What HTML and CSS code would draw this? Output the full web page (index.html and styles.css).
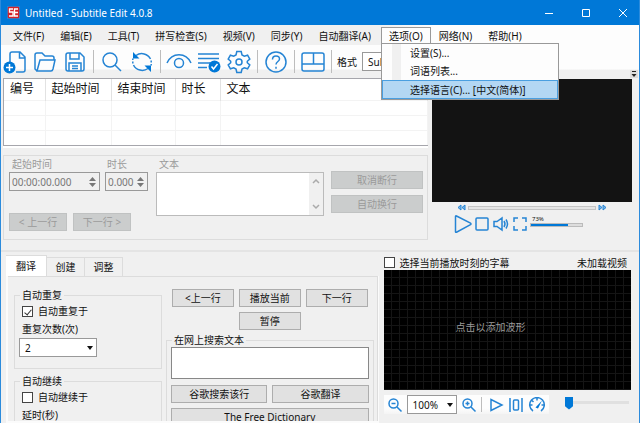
FILE: index.html
```html
<!DOCTYPE html>
<html lang="zh-CN">
<head>
<meta charset="utf-8">
<title>Untitled - Subtitle Edit 4.0.8</title>
<link rel="stylesheet" href="styles.css">
</head>
<body>
<div class="window">
  <header class="titlebar">
    <svg class="logo" viewBox="0 0 13 13"><rect width="13" height="13" rx="2" fill="#d3222a"/><path d="M6 3H2.500v3H6v4H2M11 3H7.500v7H11M7.500 6.500H11" fill="none" stroke="#fff" stroke-width="1.300"/></svg>
    <h1>Untitled - Subtitle Edit 4.0.8</h1>
    <div class="caption">
      <button aria-label="最小化"><svg viewBox="0 0 10 10"><path d="M1 5.500h8"/></svg></button>
      <button aria-label="最大化"><svg viewBox="0 0 10 10"><path d="M1.500 1.500h7v7h-7z"/></svg></button>
      <button aria-label="关闭"><svg viewBox="0 0 10 10"><path d="M1 1l8 8M9 1L1 9"/></svg></button>
    </div>
  </header>

  <nav class="menubar">
    <button>文件(F)</button>
    <button>编辑(E)</button>
    <button>工具(T)</button>
    <button>拼写检查(S)</button>
    <button>视频(V)</button>
    <button>同步(Y)</button>
    <button>自动翻译(A)</button>
    <div class="menu-open">
      <button>选项(O)</button>
      <div class="dropdown">
        <button>设置(S)...</button>
        <button>词语列表...</button>
        <button class="current">选择语言(C)... [中文(简体)]</button>
      </div>
    </div>
    <button>网络(N)</button>
    <button>帮助(H)</button>
  </nav>

  <div class="toolbar">
    <button aria-label="新建"><svg viewBox="0 0 24 24"><path d="M7 12V4q0-2 2-2h8l5 5v13q0 2-2 2h-7M16.500 2v6H22"/><circle cx="6.500" cy="17.500" r="6" class="solid"/><path d="M6.500 14v7M3 17.500h7" class="white"/></svg></button>
    <button aria-label="打开"><svg viewBox="0 0 24 24"><path d="M4 21L2 19V5q0-2 2-2h5l3 3h7q2 0 2 2v2M4 21l3-11h15l-2 9q-.5 2-2 2z"/></svg></button>
    <button aria-label="保存"><svg viewBox="0 0 24 24"><path d="M3 5q0-2 2-2h12l4 4v12q0 2-2 2H5q-2 0-2-2zM7 3v6h9V3M6 21v-8h12v8M9 16h6M9 18.500h6"/></svg></button>
    <span class="sep"></span>
    <button aria-label="查找"><svg viewBox="0 0 24 24"><circle cx="10" cy="10" r="7"/><path d="M15 15l6 6"/></svg></button>
    <button aria-label="替换"><svg viewBox="0 0 24 24"><path d="M6 5.500A9.500 9 0 0 1 20.500 9M18 18.500A9.500 9 0 0 1 3.500 15"/><path d="M2.800 13.500v-5M21.200 10.500v5" stroke-dasharray="2 1.500"/><path d="M3 2v6.500h6.500zM21 22v-6.500h-6.500z" class="solid"/></svg></button>
    <span class="sep"></span>
    <button class="eye" aria-label="可视同步"><svg viewBox="0 0 28 24"><path d="M2 13C7 2 21 2 26 13"/><circle cx="14" cy="13" r="4.500"/></svg></button>
    <button aria-label="拼写检查"><svg viewBox="0 0 24 24"><path d="M1 4h21M1 8.500h21M1 13h12M1 17.500h9"/><circle cx="17.500" cy="16.500" r="6" class="solid"/><path d="M14.500 16.500l2 2.500 4-5" class="white"/></svg></button>
    <button aria-label="设置"><svg viewBox="0 0 24 24"><path d="M9.800 1.500h4.400l.8 3.400 2.300 1.300 3.300-1 2.200 3.800-2.500 2.300v1.400l2.500 2.300-2.200 3.800-3.300-1-2.300 1.300-.8 3.400H9.800L9 19.100l-2.300-1.300-3.300 1L1.200 15l2.500-2.300v-1.400L1.200 9l2.200-3.800 3.300 1L9 4.900z"/><circle cx="12" cy="12" r="3"/></svg></button>
    <span class="sep"></span>
    <button aria-label="帮助"><svg viewBox="0 0 24 24"><circle cx="12" cy="12" r="10"/><path d="M8.500 9.500c0-5 7-4.500 7-.5 0 2.500-3.500 2.500-3.500 5.500M12 16.800v2"/></svg></button>
    <span class="sep"></span>
    <button aria-label="布局"><svg viewBox="0 0 24 24"><rect x="1" y="3" width="22" height="18" rx="2"/><path d="M1 14h22M12.500 3v11"/></svg></button>
    <span class="sep"></span>
    <label for="format">格式</label>
    <div class="combo format"><select id="format"><option>SubRip (.srt)</option></select></div>
    <svg class="grip" viewBox="0 0 8 8"><path d="M2 1.500h4"/><path d="M1.500 4h5L4 7z" fill="#222" stroke="none"/></svg>
  </div>

  <main class="upper">
    <section class="editor">
      <div class="list">
        <table>
          <colgroup><col class="c1"><col class="c2"><col class="c3"><col class="c4"><col></colgroup>
          <thead><tr><th>编号</th><th>起始时间</th><th>结束时间</th><th>时长</th><th>文本</th></tr></thead>
          <tbody>
            <tr><td></td><td></td><td></td><td></td><td></td></tr>
            <tr><td></td><td></td><td></td><td></td><td></td></tr>
            <tr><td></td><td></td><td></td><td></td><td></td></tr>
          </tbody>
        </table>
      </div>
      <div class="edit">
        <div class="times">
          <div class="time-row">
            <div class="field start"><label for="start">起始时间</label>
              <div class="spin"><input id="start" value="00:00:00.000" disabled><svg viewBox="0 0 7 12"><path d="M0 5l3.500-4L7 5zM0 7l3.500 4L7 7z"/></svg></div></div>
            <div class="field dur"><label for="dur">时长</label>
              <div class="spin"><input id="dur" value="0.000" disabled><svg viewBox="0 0 7 12"><path d="M0 5l3.500-4L7 5zM0 7l3.500 4L7 7z"/></svg></div></div>
          </div>
          <div class="step-row">
            <button class="btn" disabled>&lt; 上一行</button>
            <button class="btn" disabled>下一行 &gt;</button>
          </div>
        </div>
        <div class="field text"><label for="text">文本</label>
          <div class="area"><textarea id="text" disabled></textarea>
            <span class="scroll"><svg viewBox="0 0 8 6"><path d="M1 5l3-3 3 3"/></svg><svg viewBox="0 0 8 6"><path d="M1 1l3 3 3-3"/></svg></span></div></div>
        <div class="breaks">
          <button class="btn" disabled>取消断行</button>
          <button class="btn" disabled>自动换行</button>
        </div>
      </div>
    </section>
    <section class="player">
      <div class="video"></div>
      <div class="seek">
        <button aria-label="后退"><svg viewBox="0 0 9 7"><path d="M4 1L1 3.500 4 6zM8 1L5 3.500 8 6z"/></svg></button>
        <span class="track"></span>
        <button aria-label="前进"><svg viewBox="0 0 9 7"><path d="M1 1l3 2.500L1 6zM5 1l3 2.500L5 6z"/></svg></button>
      </div>
      <div class="transport">
        <button aria-label="播放"><svg viewBox="0 0 18 18"><path d="M1.500 1.500q0-1 1-.5l14 7.200q1 .8 0 1.500L2.500 17.200q-1 .3-1-.5z"/></svg></button>
        <button aria-label="停止"><svg viewBox="0 0 18 18"><rect x="3" y="3" width="12" height="12" rx="1"/></svg></button>
        <button aria-label="静音"><svg viewBox="0 0 18 18"><path d="M2 6.500h3L10 3v12l-5-3.500H2zM12 6q2 3 0 6M14 4.500q3 4.500 0 9"/></svg></button>
        <button aria-label="全屏"><svg viewBox="0 0 18 18"><path d="M3 7V3h4M11 3h4v4M15 11v4h-4M7 15H3v-4"/></svg></button>
        <div class="volume"><span>73%</span><div class="level"></div></div>
      </div>
    </section>
  </main>

  <div class="lower">
    <section class="tabs">
      <div class="tab-row" role="tablist">
        <button role="tab" class="active" aria-selected="true">翻译</button>
        <button role="tab">创建</button>
        <button role="tab">调整</button>
      </div>
      <div class="panel">
        <div class="side">
          <fieldset>
            <legend>自动重复</legend>
            <label class="check"><input type="checkbox" checked>自动重复于</label>
            <label class="caption-label" for="count">重复次数(次)</label>
            <div class="combo count"><select id="count"><option>2</option></select></div>
          </fieldset>
          <fieldset>
            <legend>自动继续</legend>
            <label class="check"><input type="checkbox">自动继续于</label>
            <span class="caption-label">延时(秒)</span>
          </fieldset>
        </div>
        <div class="actions">
          <div class="play-grid">
            <button class="btn">&lt;上一行</button>
            <button class="btn">播放当前</button>
            <button class="btn">下一行</button>
            <button class="btn pause">暂停</button>
          </div>
          <fieldset class="search">
            <legend>在网上搜索文本</legend>
            <textarea aria-label="在网上搜索文本"></textarea>
            <div class="search-grid">
              <button class="btn">谷歌搜索该行</button>
              <button class="btn">谷歌翻译</button>
              <button class="btn wide">The Free Dictionary</button>
            </div>
          </fieldset>
        </div>
      </div>
    </section>
    <section class="wave">
      <div class="wave-head">
        <label class="check"><input type="checkbox">选择当前播放时刻的字幕</label>
        <span>未加载视频</span>
      </div>
      <div class="canvas"><span>点击以添加波形</span></div>
      <div class="wave-foot">
        <div class="wave-tools">
          <button aria-label="缩小"><svg viewBox="0 0 16 16"><circle cx="6.500" cy="6.500" r="4.500"/><path d="M10 10l4.500 4.500M4.500 6.500h4"/></svg></button>
          <div class="combo zoom"><select aria-label="缩放"><option>100%</option></select></div>
          <button aria-label="放大"><svg viewBox="0 0 16 16"><circle cx="6.500" cy="6.500" r="4.500"/><path d="M10 10l4.500 4.500M4.500 6.500h4M6.500 4.500v4"/></svg></button>
          <span class="sep"></span>
          <button aria-label="播放"><svg viewBox="0 0 16 16"><path d="M3 2.500v11L14 8z"/></svg></button>
          <button aria-label="居中"><svg viewBox="0 0 16 16"><path d="M2 1v14M14 1v14"/><rect x="5.500" y="3" width="5" height="10" rx="1"/></svg></button>
          <button class="gauge" aria-label="播放速度"><svg viewBox="0 0 18 16"><path d="M5 14A7.300 7.300 0 1 1 13 14M9 1v2.500M2 8h2.500M13.500 8H16M4 3.500L5.500 5"/><path d="M7.500 10.500L14 3.500l-4 8z" class="solid"/></svg></button>
        </div>
        <input type="range" min="0" max="100" value="0" aria-label="垂直缩放">
      </div>
    </section>
  </div>
</div>
</body>
</html>
```
FILE: styles.css
```css
* { box-sizing: border-box; }

:root {
  --blue: #0078d7;
  --face: #f0f0f0;
  --line: #dcdcdc;
}

body {
  margin: 0;
  font: 10px/14px "Noto Sans", "Noto Sans CJK SC", sans-serif;
  color: #111;
  background: var(--face);
}

button, input, select, textarea {
  font: inherit;
  color: inherit;
  margin: 0;
  padding: 0;
}

button {
  border: 0;
  background: none;
  white-space: nowrap;
}

svg {
  display: block;
  fill: none;
  stroke: #2584d4;
  stroke-width: 1.5;
}

.solid { fill: var(--blue); stroke: none; }
.white { stroke: #fff; }

.window {
  display: flex;
  flex-direction: column;
  height: 100vh;
  overflow: hidden;
  border: solid #2b8bdc;
  border-width: 0 1px;
}

/* Title bar */
.titlebar {
  display: flex;
  align-items: center;
  flex: none;
  height: 25px;
  padding: 0 6px;
  color: #fff;
  background: var(--blue);
}
.logo { width: 13px; height: 13px; }
h1 { margin: 0 auto 0 5px; font-size: 10px; font-weight: 400; }
.caption { display: flex; gap: 17px; }
.caption button { width: 20px; }
.caption svg { width: 10px; height: 10px; margin: auto; stroke: #fff; stroke-width: 1; }

/* Menu bar */
.menubar {
  display: flex;
  flex: none;
  height: 20px;
  padding: 2px 0 0 4px;
  background: linear-gradient(90deg, var(--face) 60%, #fdfdfd 68%);
}
.menubar button { padding: 0 8px; }
.menu-open { position: relative; margin-left: 2px; border: solid #999; border-width: 1px 1px 0; background: #fdfdfd; }
.menu-open > button { height: 16px; padding: 0 7px; }
.dropdown {
  position: absolute;
  z-index: 2;
  top: 15px;
  left: -1px;
  display: flex;
  flex-direction: column;
  width: 178px;
  border: 1px solid #999;
  background: linear-gradient(90deg, #fdfdfd 10px, var(--face) 10px 19px, #fdfdfd 19px);
}
.dropdown button { height: 18px; padding: 0 0 0 28px; text-align: left; }
.dropdown .current { height: 19px; background: #b3d7f3; outline: 1px solid #4a9fe0; outline-offset: -1px; }

/* Toolbar */
.toolbar {
  display: flex;
  align-items: center;
  flex: none;
  height: 33px;
  padding: 0 0 0 2px;
  background: linear-gradient(#fdfdfd 24px, var(--face) 25px);
}
.toolbar button { padding: 0 3px; }
.toolbar button svg { width: 24px; height: 24px; }
.toolbar .eye svg { width: 28px; }
.toolbar button:first-child { padding-left: 0; }
.toolbar .eye { padding: 0 1px; }
.sep { width: 1px; height: 23px; margin: 0 3px; background: #bdbdbd; }
.toolbar label { margin: 0 5px 0 2px; }
.toolbar .grip { width: 8px; height: 8px; margin: 0 1px 0 auto; align-self: flex-end; background: #dcdcdc; stroke: #222; stroke-width: 1; }

.combo { position: relative; border: 1px solid #999; background: #fff; }
.combo select { display: block; width: 100%; height: 17px; padding-left: 5px; border: 0; appearance: none; background: none; }
.combo::after {
  content: "";
  position: absolute;
  top: 7px;
  right: 3px;
  border: 3px solid transparent;
  border-top: 4px solid #111;
}
.format { width: 110px; }

/* Subtitle list and editor */
.upper {
  display: grid;
  grid-template-columns: minmax(0, 425fr) minmax(0, 200fr);
  gap: 4px;
  flex: none;
  padding: 0 7px 10px 2px;
  border-bottom: 2px solid #e4e4e4;
}
.list { border: solid #a6a6ac; border-width: 1px 0 1px 1px; background: #fff; box-shadow: 0 2px #fff; }
table { width: 100%; table-layout: fixed; border-collapse: collapse; font-size: 12px; }
.c1 { width: 41px; }
.c2 { width: 66px; }
.c3 { width: 64px; }
.c4 { width: 45px; }
th { height: 21px; padding: 0 0 0 6px; border-right: 1px solid #e2e2e2; font-weight: 400; text-align: left; white-space: nowrap; }
td { height: 15px; padding: 0; border: solid #f3f3f3; border-width: 1px 1px 0 0; }
.edit {
  display: grid;
  grid-template-columns: 140px minmax(0, 1fr) 92px;
  column-gap: 7px;
  height: 85px;
  margin-top: 9px;
  padding: 1px 4px 0 5px;
  border: 1px solid var(--line);
  color: #9a9a9a;
}
.field label { display: block; height: 15px; padding-left: 3px; }
.time-row { display: flex; gap: 5px; }
.start { width: 91px; }
.dur { width: 43px; }
.dur label { padding-left: 2px; }
.spin { display: flex; align-items: center; height: 19px; padding-right: 3px; border: 1px solid #999; }
.spin input { flex: 1; min-width: 0; padding-left: 2px; border: 0; background: none; color: #777; }
.spin svg { width: 7px; height: 12px; fill: #777; stroke: none; }
.step-row { display: flex; gap: 6px; margin-top: 22px; }
.step-row .btn { flex: none; width: 58px; }
.area { display: flex; height: 44px; border: 1px solid #bbb; background: #fff; }
textarea { display: block; width: 100%; border: 0; background: #fff; resize: none; }
.scroll { display: flex; flex: none; flex-direction: column; justify-content: space-between; width: 14px; padding: 5px 3px; background: var(--face); }
.scroll svg { width: 8px; height: 6px; stroke: #aaa; }
.breaks { display: flex; flex-direction: column; gap: 6px; padding-top: 14px; }

.btn { height: 18px; border: 1px solid #adadad; background: #e1e1e1; line-height: 14px; }
.btn:disabled { border-color: #c0c2c2; background: #cbcdcd; color: #9a9a9a; }

/* Video player */
.video { height: 123px; margin-top: 1px; background: #131313; }
.seek { display: flex; align-items: center; gap: 2px; height: 11px; padding: 0 25px; }
.seek svg { width: 9px; height: 7px; stroke-width: 1; fill: #7db7e8; }
.track { flex: 1; height: 4px; border: 1px solid #c4c4c4; background: #e4e4e4; }
.transport { display: flex; align-items: center; gap: 1px; padding: 2px 0 0 22px; }
.transport svg { width: 18px; height: 18px; }
.volume { width: 53px; font-size: 6px; line-height: 7px; }
.volume span { display: block; padding-left: 2px; }
.level { height: 4px; margin-bottom: 5px; border: 1px solid #bbb; background: linear-gradient(90deg, var(--blue) 73%, #ddd 73%); }

/* Lower area */
.lower {
  display: grid;
  grid-template-columns: minmax(0, 372fr) minmax(0, 247fr);
  gap: 5px;
  flex: 1;
  min-height: 0;
  padding: 3px 8px 0 5px;
}
.tabs { display: flex; flex-direction: column; min-height: 0; }
.tab-row { display: flex; align-items: flex-end; flex: none; height: 21px; }
.tab-row button { width: 38px; height: 19px; border: solid var(--line); border-width: 1px 1px 0 0; }
.tab-row .active { width: 41px; height: 21px; background: #fff; }
.panel {
  display: grid;
  grid-template-columns: 148px minmax(0, 1fr);
  gap: 4px;
  flex: 1;
  min-height: 0;
  overflow: hidden;
  padding: 12px 4px 0 6px;
  border: solid #fbfbfb;
  border-width: 0 1px 2px 2px;
  box-shadow: inset -1px 1px var(--line);
}
fieldset { min-width: 0; margin: 0; padding: 0 4px; border: 1px solid var(--line); }
legend { height: 14px; margin-left: 1px; padding: 0 2px; }
.side fieldset { height: 81px; margin-bottom: 5px; }
.check { display: flex; align-items: center; gap: 5px; }
.side .check { padding: 2px 3px 4px; }
input[type="checkbox"] { display: grid; place-items: center; width: 11px; height: 11px; border: 1px solid #444; appearance: none; background: #fff; }
input[type="checkbox"]:checked::after { content: ""; width: 3px; height: 6px; border: solid #333; border-width: 0 1px 1px 0; transform: rotate(40deg); }
.caption-label { display: block; padding: 0 3px; }
.count { width: 78px; margin-top: 2px; }
.play-grid { display: grid; grid-template-columns: repeat(3, 1fr); gap: 5px; padding: 1px 6px 3px; }
.pause { grid-column: 2; }
.search { height: 110px; }
.search legend { padding: 0 2px; }
.search textarea { height: 32px; border: 1px solid #888; }
.search-grid { display: grid; grid-template-columns: 1fr 1fr; gap: 5px; margin-top: 6px; }
.wide { grid-column: span 2; }

.wave-head { display: flex; justify-content: space-between; align-items: center; height: 15px; padding-right: 4px; }
.wave-head .check { white-space: nowrap; }
.canvas {
  display: flex;
  align-items: center;
  height: 120px;
  padding: 0 0 6px 72px;
  color: #9a9a9a;
  background:
    linear-gradient(90deg, transparent 7px, #151515 7px) 0 0 / 8px 8px,
    linear-gradient(transparent 7px, #151515 7px) 0 0 / 8px 8px,
    #000;
}
.wave-foot { display: flex; align-items: flex-start; justify-content: space-between; padding-top: 5px; }
.wave-tools { display: flex; align-items: center; padding: 0 3px; background: linear-gradient(#fdfdfd 70%, #f4f4f4); }
.wave-tools svg { width: 16px; height: 16px; }
.wave-tools button { margin-right: 4px; }
.wave-tools .gauge { margin: 0; }
.gauge svg { width: 18px; }
.zoom { width: 50px; margin-right: 4px; }
.wave-tools .sep { height: 15px; margin: 0 6px 0 0; }
input[type="range"] { width: 64px; height: 16px; margin-right: 2px; appearance: none; background: linear-gradient(transparent 6px, #e0e0e0 6px 9px, transparent 9px); }
input[type="range"]::-webkit-slider-thumb { width: 8px; height: 13px; appearance: none; background: var(--blue); clip-path: polygon(0 0, 100% 0, 100% 75%, 50% 100%, 0 75%); }
```
